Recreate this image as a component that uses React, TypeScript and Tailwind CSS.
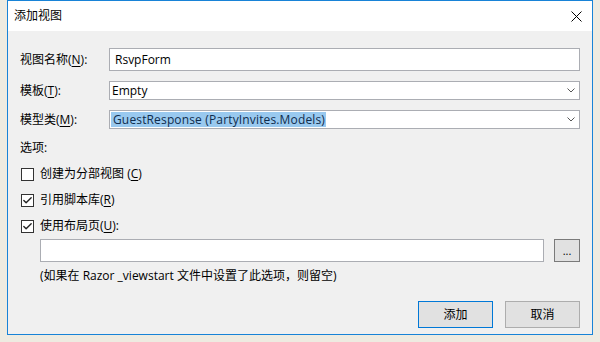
import { Check } from "lucide-react";

function Label({ text, mn, after = "):" }: { text: string; mn: string; after?: string }) {
  return (
    <span className="whitespace-pre">
      {text}(<span className="underline underline-offset-2">{mn}</span>
      {after}
    </span>
  );
}

function Chevron() {
  return (
    <svg width="8" height="5" viewBox="0 0 8 5" className="shrink-0">
      <path d="M0.5 0.5 L4 4 L7.5 0.5" fill="none" stroke="#555" strokeWidth="1" />
    </svg>
  );
}

function CheckRow({ checked, children }: { checked: boolean; children: React.ReactNode }) {
  return (
    <div className="flex items-center h-[16px] ml-[1px]">
      <div className="w-[13px] h-[13px] border border-[#333] bg-white flex items-center justify-center">
        {checked && <Check size={11} strokeWidth={3} className="text-[#222]" />}
      </div>
      <div className="ml-[6px]">{children}</div>
    </div>
  );
}

export default function AddViewDialog() {
  return (
    <div className="w-[600px] h-[342px] bg-[#eeebe1] font-['Open_Sans','Noto_Sans_CJK_SC',sans-serif] text-[12px] leading-[16px] text-black">
      <div className="ml-[7px] w-[586px] h-[335px] border border-[#1883d7] flex flex-col bg-[#f0f0f0]">
        {/* title bar */}
        <div className="h-[30px] bg-white flex items-center justify-between pl-[6px] pr-[10px]">
          <span className="text-[12px]">添加视图</span>
          <svg width="11" height="11" viewBox="0 0 11 11">
            <path d="M0.5 0.5 L10.5 10.5 M10.5 0.5 L0.5 10.5" stroke="#000" strokeWidth="1" />
          </svg>
        </div>

        <div className="flex flex-col px-[12px] pt-[17px]">
          <div className="flex items-center h-[23px]">
            <div className="w-[89px]">
              <Label text="视图名称" mn="N" />
            </div>
            <div className="flex-1 h-full bg-white border border-[#abadb3] flex items-center pl-[5px]">RsvpForm</div>
          </div>

          <div className="flex items-center h-[19px] mt-[10px]">
            <div className="w-[89px]">
              <Label text="模板" mn="T" />
            </div>
            <div className="flex-1 h-full bg-white border border-[#abadb3] flex items-center pl-[2px] pr-[4px]">
              <span className="flex-1">Empty</span>
              <Chevron />
            </div>
          </div>

          <div className="flex items-center h-[19px] mt-[10px]">
            <div className="w-[89px]">
              <Label text="模型类" mn="M" />
            </div>
            <div className="flex-1 h-full bg-white border border-[#abadb3] flex items-center p-[1px] pr-[4px]">
              <span className="flex-1 flex h-full">
                <span className="bg-[#99c9ef] text-[#0f2c4d] h-full flex items-center pl-[2px] pr-[1px] tracking-[0.15px]">
                  GuestResponse (PartyInvites.Models)
                </span>
              </span>
              <Chevron />
            </div>
          </div>

          <div className="mt-[11px]">选项:</div>

          <div className="mt-[10px]">
            <CheckRow checked={false}>
              <Label text="创建为分部视图 " mn="C" after=")" />
            </CheckRow>
          </div>
          <div className="mt-[10px]">
            <CheckRow checked>
              <Label text="引用脚本库" mn="R" after=")" />
            </CheckRow>
          </div>
          <div className="mt-[10px]">
            <CheckRow checked>
              <Label text="使用布局页" mn="U" />
            </CheckRow>
          </div>

          <div className="flex ml-[20px] mt-[5px] h-[23px] gap-[10px]">
            <div className="flex-1 bg-white border border-[#abadb3]" />
            <div className="w-[26px] bg-[#e1e1e1] border border-[#7a7a7a] flex items-center justify-center text-[11px]">
              ...
            </div>
          </div>

          <div className="ml-[20px] mt-[6px]">(如果在 Razor _viewstart 文件中设置了此选项，则留空)</div>

          <div className="flex justify-end gap-[12px] mt-[17px]">
            <div className="w-[75px] h-[27px] bg-[#e1e1e1] border border-[#0078d7] flex items-center justify-center">
              添加
            </div>
            <div className="w-[75px] h-[27px] bg-[#e1e1e1] border border-[#adadad] flex items-center justify-center">
              取消
            </div>
          </div>
        </div>
      </div>
    </div>
  );
}
